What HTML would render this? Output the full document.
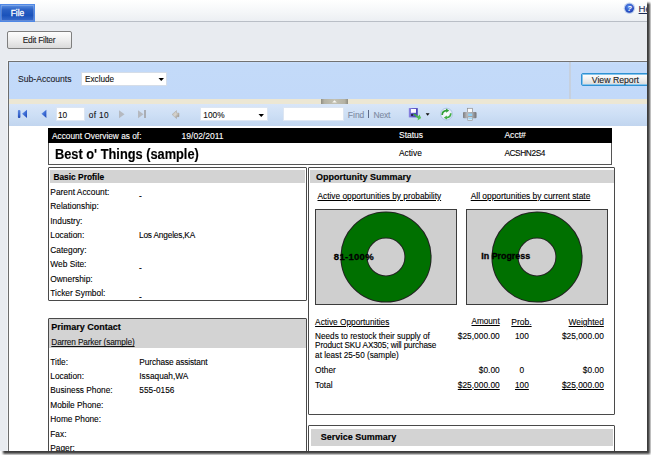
<!DOCTYPE html>
<html><head><meta charset="utf-8"><style>
html,body{margin:0;padding:0;width:651px;height:455px;overflow:hidden;background:#fff;}
body{position:relative;font-family:"Liberation Sans",sans-serif;}
.a{position:absolute;}
.t{position:absolute;white-space:nowrap;line-height:normal;-webkit-text-stroke:0.1px currentColor;}
</style></head><body>
<div class="a" style="left:3px;top:3px;width:647px;height:451px;background:#3c3c3c;filter:blur(0.95px)"></div>
<div class="a" style="left:0;top:0;width:647px;height:451px;overflow:hidden;background:#fff">
<div class="a" style="left:0px;top:0px;width:651px;height:21px;background:linear-gradient(#ffffff,#f4f6f8 60%,#eceff3)"></div>
<div class="a" style="left:0px;top:21px;width:651px;height:1px;background:#b9bec6"></div>
<div class="a" style="left:0px;top:22px;width:651px;height:433px;background:#e8ebf0"></div>
<div class="a" style="left:0px;top:4px;width:35px;height:18px;background:linear-gradient(#5a8fe2,#2a60c4 30%,#1a52bb 65%,#3a6ccc);border:1px solid #4f88e6;box-shadow:inset 0 0 0 1px rgba(255,255,255,0.22);box-sizing:border-box"></div>
<div class="t " style="left:10.8px;top:8.29px;font-size:8.3px;font-weight:normal;color:#fff;-webkit-text-stroke:0.3px #fff">File</div>
<svg class="a" style="left:622px;top:1px" width="15" height="15" viewBox="0 0 15 15"><defs><radialGradient id="hg" cx="0.45" cy="0.35" r="0.7"><stop offset="0" stop-color="#5d8ff0"/><stop offset="1" stop-color="#1537b0"/></radialGradient></defs><circle cx="7.4" cy="7.3" r="5.7" fill="#bccfee"/><circle cx="7.4" cy="7.3" r="4.5" fill="url(#hg)"/><text x="7.6" y="10.3" font-family="Liberation Sans" font-weight="bold" font-style="italic" font-size="7.5" fill="#fff" text-anchor="middle">?</text></svg>
<div class="t " style="left:638.6px;top:3.31px;font-size:9.6px;font-weight:normal;color:#1c2a55;text-decoration:underline">He</div>
<div class="a" style="left:7px;top:31px;width:65px;height:18px;background:linear-gradient(#fdfdfd,#eeeeee 50%,#dadada);border:1px solid #7f7f7f;border-radius:2px;box-sizing:border-box"></div>
<div class="t " style="left:22.7px;top:35.19px;font-size:8.3px;font-weight:normal;color:#1b1b1b;letter-spacing:-0.22px">Edit Filter</div>
<div class="a" style="left:8px;top:61px;width:640px;height:390px;background:#fff"></div>
<div class="a" style="left:7px;top:60px;width:1px;height:391px;background:#f1f3f6"></div>
<div class="a" style="left:7px;top:60px;width:641px;height:1px;background:#f1f3f6"></div>
<div class="a" style="left:9px;top:62px;width:638px;height:37px;background:linear-gradient(#c8defb,#c3daf9 3px,#c2d9f9)"></div>
<div class="a" style="left:8px;top:61px;width:640px;height:1px;background:#727272"></div>
<div class="a" style="left:8px;top:61px;width:1px;height:390px;background:#6c6c6c"></div>
<div class="a" style="left:569px;top:62px;width:2px;height:37px;background:#c6d0de"></div>
<div class="t " style="left:18px;top:74.22px;font-size:8.6px;font-weight:normal;color:#1d1d2b;">Sub-Accounts</div>
<div class="a" style="left:81px;top:71.5px;width:86px;height:14px;background:#fff;border:1px solid #d5dde8;box-sizing:border-box"></div>
<div class="t " style="left:85px;top:75.48px;font-size:8.2px;font-weight:normal;color:#111;">Exclude</div>
<svg class="a" style="left:158px;top:77px" width="7" height="5"><path d="M0.5 1 L6 1 L3.25 4 Z" fill="#000"/></svg>
<div class="a" style="left:581px;top:73px;width:70px;height:13px;background:linear-gradient(#ffffff,#f1f1f1 45%,#d9d9d9);border:1px solid #2f92d4;box-shadow:inset 0 0 0 1px #86c4ec;border-radius:2px;box-sizing:border-box"></div>
<div class="t " style="left:591.8px;top:75.13px;font-size:8.7px;font-weight:normal;color:#222;">View Report</div>
<div class="a" style="left:9px;top:99px;width:638px;height:5px;background:#ece7d4"></div>
<div class="a" style="left:321px;top:99px;width:27px;height:5px;background:linear-gradient(to right,#8f8d82,#b4b2a4 12%,#c2c0b2 50%,#b4b2a4 88%,#8f8d82)"></div>
<svg class="a" style="left:331px;top:99px" width="7" height="5"><path d="M1.2 3.4 L3.5 1.2 L5.8 3.4 Z" fill="#fafaf5"/></svg>
<div class="a" style="left:9px;top:104px;width:638px;height:21.6px;background:linear-gradient(#d9e6f8,#cddff5 50%,#c1d5ef)"></div>
<svg class="a" style="left:14px;top:106px" width="36" height="18" viewBox="0 0 36 18">
<defs><linearGradient id="bt" x1="0" y1="0" x2="1" y2="1"><stop offset="0" stop-color="#8fb2f0"/><stop offset="0.5" stop-color="#3f6fd6"/><stop offset="1" stop-color="#1b46b8"/></linearGradient>
<linearGradient id="bb" x1="0" y1="0" x2="0" y2="1"><stop offset="0" stop-color="#5f8be0"/><stop offset="0.6" stop-color="#3b68cf"/><stop offset="1" stop-color="#1d46b0"/></linearGradient></defs>
<rect x="3.9" y="3.9" width="2.5" height="8" rx="1" fill="url(#bb)"/>
<path d="M13 3.8 L13 11.9 L8 7.85 Z" fill="url(#bt)"/>
<path d="M32.4 3.8 L32.4 11.9 L27.4 7.85 Z" fill="url(#bt)"/>
</svg>
<div class="a" style="left:56px;top:107px;width:29px;height:14px;background:#fff;border:1px solid #dde6f2;box-sizing:border-box"></div>
<div class="t " style="left:57.9px;top:109.99px;font-size:8.3px;font-weight:normal;color:#111;">10</div>
<div class="t " style="left:88.7px;top:109.99px;font-size:8.3px;font-weight:normal;color:#111;letter-spacing:0.35px">of 10</div>
<svg class="a" style="left:118px;top:110px" width="8" height="9"><path d="M1 0.3 L1 8.3 L6.5 4.3 Z" fill="#b5b9c0"/></svg>
<svg class="a" style="left:137px;top:110px" width="8" height="9"><path d="M1 0.3 L1 8.3 L6.5 4.3 Z" fill="#b5b9c0"/></svg>
<div class="a" style="left:144.3px;top:110.4px;width:2px;height:7.8px;background:#a9adb4"></div>
<svg class="a" style="left:165px;top:106px" width="20" height="18" viewBox="0 0 20 18"><defs><linearGradient id="ba" x1="0" y1="0" x2="1" y2="1"><stop offset="0" stop-color="#b9b6b0"/><stop offset="0.5" stop-color="#d6d3cd"/><stop offset="1" stop-color="#7f7b75"/></linearGradient></defs><path d="M7.1 8.5 L11.5 4.6 L11.5 7.1 L14 7.1 L14 10.7 L11.5 10.7 L11.5 12.6 Z" fill="url(#ba)" stroke="#a9a59f" stroke-width="0.5"/></svg>
<div class="a" style="left:200px;top:107px;width:68px;height:14px;background:#fff;border:1px solid #dde6f2;box-sizing:border-box"></div>
<div class="t " style="left:203.3px;top:109.99px;font-size:8.3px;font-weight:normal;color:#111;">100%</div>
<svg class="a" style="left:258px;top:113px" width="7" height="5"><path d="M0.5 1 L6 1 L3.25 4 Z" fill="#000"/></svg>
<div class="a" style="left:283px;top:107px;width:61px;height:14px;background:#fff;border:1px solid #dde6f2;box-sizing:border-box"></div>
<div class="t " style="left:347.8px;top:109.81px;font-size:8.5px;font-weight:normal;color:#7d8aa3;">Find</div>
<div class="a" style="left:367.8px;top:110px;width:1.2px;height:8px;background:#5d6a88"></div>
<div class="t " style="left:373.6px;top:109.81px;font-size:8.5px;font-weight:normal;color:#7d8aa3;letter-spacing:-0.2px">Next</div>
<svg class="a" style="left:404px;top:104px" width="30" height="20" viewBox="0 0 30 20">
<defs><linearGradient id="fl" x1="0" x2="1"><stop offset="0" stop-color="#8e88e2"/><stop offset="0.4" stop-color="#5d55c9"/><stop offset="1" stop-color="#4a42b8"/></linearGradient>
<linearGradient id="ga" x1="0" y1="0" x2="1" y2="1"><stop offset="0" stop-color="#2f9a3a"/><stop offset="1" stop-color="#69cf6a"/></linearGradient></defs>
<rect x="4.8" y="4.1" width="9" height="9.3" fill="url(#fl)"/>
<rect x="6.9" y="5" width="5.1" height="3.8" fill="#fbfbff"/>
<rect x="7.2" y="10.2" width="1.6" height="1.6" fill="#111"/>
<path d="M9 10.3 L10.6 9.4 L14.2 12.2 L15.4 10.6 L17.2 14 L13.6 16.6 L14 14.6 Z" fill="url(#ga)"/>
<path d="M21.7 9.2 L25.6 9.2 L23.65 11.8 Z" fill="#111"/>
</svg>
<svg class="a" style="left:439px;top:107px" width="15" height="15" viewBox="0 0 15 15">
<defs><radialGradient id="rg"><stop offset="0" stop-color="#ffffff"/><stop offset="1" stop-color="#e2ebf7"/></radialGradient></defs>
<circle cx="7.5" cy="7.1" r="5.9" fill="url(#rg)" stroke="#a8c0e2" stroke-width="0.9"/>
<path d="M3.2 8 C3.2 5.5 5 3.8 7.5 3.6" stroke="#2f9e35" stroke-width="1.7" fill="none"/>
<path d="M7 1.6 L10.2 3.6 L7.2 5.8 Z" fill="#2f9e35"/>
<path d="M11.8 6.3 C11.8 8.8 10 10.5 7.5 10.7" stroke="#3fae45" stroke-width="1.7" fill="none"/>
<path d="M8 12.6 L4.8 10.7 L7.8 8.5 Z" fill="#3fae45"/>
</svg>
<svg class="a" style="left:462px;top:107px" width="15" height="15" viewBox="0 0 15 15">
<defs><linearGradient id="pg" x1="0" x2="1"><stop offset="0" stop-color="#7b7c80"/><stop offset="0.3" stop-color="#b9babd"/><stop offset="0.7" stop-color="#a6a7ab"/><stop offset="1" stop-color="#6f7074"/></linearGradient></defs>
<rect x="5.5" y="1.3" width="5" height="4.5" fill="#fafafa" stroke="#8c8c8c" stroke-width="0.7"/>
<rect x="1" y="5" width="13.5" height="6.2" rx="1" fill="url(#pg)"/>
<rect x="5.8" y="10" width="4.8" height="3.6" fill="#f4f8fc" stroke="#8c8c8c" stroke-width="0.6"/>
<rect x="6.2" y="6.6" width="4" height="2.4" fill="#8fd0f5"/>
<rect x="6.3" y="10.6" width="3.8" height="1.8" fill="#9fd6f5"/>
</svg>
<div class="a" style="left:47.5px;top:128px;width:564.5px;height:15px;background:#000"></div>
<div class="a" style="left:48px;top:143px;width:564px;height:22px;background:#fff;border:1px solid #555;border-top:none;box-sizing:border-box"></div>
<div class="t " style="left:52px;top:130.99px;font-size:8.3px;font-weight:normal;color:#fff;">Account Overview as of:</div>
<div class="t " style="left:181.6px;top:130.81px;font-size:8.5px;font-weight:normal;color:#fff;">19/02/2011</div>
<div class="t " style="left:399px;top:130.11px;font-size:8.5px;font-weight:normal;color:#fff;">Status</div>
<div class="t " style="left:504.4px;top:130.02px;font-size:8.6px;font-weight:normal;color:#fff;">Acct#</div>
<div class="t " style="left:55px;top:145.82px;font-size:13.9px;font-weight:bold;color:#000;-webkit-text-stroke:0.15px currentColor;transform:scaleX(0.921);transform-origin:0 0;-webkit-text-stroke:0.15px #000">Best o' Things (sample)</div>
<div class="t " style="left:399px;top:147.80px;font-size:8.4px;font-weight:normal;color:#000;">Active</div>
<div class="t " style="left:504.4px;top:147.89px;font-size:8.3px;font-weight:normal;color:#000;letter-spacing:-0.4px">ACSHN2S4</div>
<div class="a" style="left:48px;top:167px;width:259px;height:134px;border:1px solid #4a4a4a;box-sizing:border-box;background:#fff;border-radius:1px"></div>
<div class="a" style="left:50px;top:170px;width:255px;height:13px;background:#d3d3d3"></div>
<div class="t " style="left:53.4px;top:171.90px;font-size:8.4px;font-weight:bold;color:#000;-webkit-text-stroke:0.15px currentColor;">Basic Profile</div>
<div class="t " style="left:50.3px;top:186.90px;font-size:8.4px;font-weight:normal;color:#000;">Parent Account:</div>
<div class="t " style="left:139px;top:190.69px;font-size:8.3px;font-weight:normal;color:#000;">-</div>
<div class="t " style="left:50.3px;top:201.40px;font-size:8.4px;font-weight:normal;color:#000;">Relationship:</div>
<div class="t " style="left:50.3px;top:215.90px;font-size:8.4px;font-weight:normal;color:#000;">Industry:</div>
<div class="t " style="left:50.3px;top:230.40px;font-size:8.4px;font-weight:normal;color:#000;">Location:</div>
<div class="t " style="left:139px;top:230.49px;font-size:8.3px;font-weight:normal;color:#000;letter-spacing:-0.18px">Los Angeles,KA</div>
<div class="t " style="left:50.3px;top:244.90px;font-size:8.4px;font-weight:normal;color:#000;">Category:</div>
<div class="t " style="left:50.3px;top:259.40px;font-size:8.4px;font-weight:normal;color:#000;">Web Site:</div>
<div class="t " style="left:139px;top:263.19px;font-size:8.3px;font-weight:normal;color:#000;">-</div>
<div class="t " style="left:50.3px;top:273.90px;font-size:8.4px;font-weight:normal;color:#000;">Ownership:</div>
<div class="t " style="left:50.3px;top:288.40px;font-size:8.4px;font-weight:normal;color:#000;">Ticker Symbol:</div>
<div class="t " style="left:139px;top:292.19px;font-size:8.3px;font-weight:normal;color:#000;">-</div>
<div class="a" style="left:48px;top:318px;width:259px;height:140px;border:1px solid #4a4a4a;box-sizing:border-box;background:#fff;border-radius:1px"></div>
<div class="a" style="left:49px;top:319px;width:257px;height:29px;background:#d3d3d3"></div>
<div class="t " style="left:51.3px;top:322.36px;font-size:9.0px;font-weight:bold;color:#000;-webkit-text-stroke:0.15px currentColor;">Primary Contact</div>
<div class="t " style="left:51.3px;top:337.29px;font-size:8.3px;font-weight:normal;color:#111;text-decoration:underline;letter-spacing:-0.155px">Darren Parker (sample)</div>
<div class="t " style="left:50.3px;top:356.79px;font-size:8.3px;font-weight:normal;color:#000;">Title:</div>
<div class="t " style="left:139.3px;top:356.79px;font-size:8.3px;font-weight:normal;color:#000;letter-spacing:-0.11px">Purchase assistant</div>
<div class="t " style="left:50.3px;top:371.14px;font-size:8.3px;font-weight:normal;color:#000;">Location:</div>
<div class="t " style="left:139.3px;top:371.14px;font-size:8.3px;font-weight:normal;color:#000;">Issaquah,WA</div>
<div class="t " style="left:50.3px;top:385.49px;font-size:8.3px;font-weight:normal;color:#000;">Business Phone:</div>
<div class="t " style="left:139.3px;top:385.49px;font-size:8.3px;font-weight:normal;color:#000;">555-0156</div>
<div class="t " style="left:50.3px;top:399.84px;font-size:8.3px;font-weight:normal;color:#000;">Mobile Phone:</div>
<div class="t " style="left:50.3px;top:414.19px;font-size:8.3px;font-weight:normal;color:#000;">Home Phone:</div>
<div class="t " style="left:50.3px;top:428.54px;font-size:8.3px;font-weight:normal;color:#000;">Fax:</div>
<div class="t " style="left:50.3px;top:442.89px;font-size:8.3px;font-weight:normal;color:#000;">Pager:</div>
<div class="a" style="left:308px;top:167px;width:307px;height:248px;border:1px solid #4a4a4a;box-sizing:border-box;background:#fff;border-radius:1px"></div>
<div class="a" style="left:310px;top:170px;width:304px;height:13px;background:#d3d3d3"></div>
<div class="t " style="left:316px;top:171.55px;font-size:9.0px;font-weight:bold;color:#000;-webkit-text-stroke:0.15px currentColor;">Opportunity Summary</div>
<div class="t " style="left:317.5px;top:190.79px;font-size:8.3px;font-weight:normal;color:#000;text-decoration:underline">Active opportunities by probability</div>
<div class="t " style="left:470.7px;top:190.70px;font-size:8.4px;font-weight:normal;color:#000;text-decoration:underline">All opportunities by current state</div>
<div class="a" style="left:315px;top:209px;width:142px;height:96px;background:#cfcfcf;border:1px solid #3c3c3c;box-sizing:border-box"></div>
<svg class="a" style="left:339px;top:209.5px" width="94" height="94"><circle cx="47" cy="47" r="32" fill="none" stroke="#222" stroke-width="27.2"/><circle cx="47" cy="47" r="32" fill="none" stroke="#007000" stroke-width="25.2"/></svg>
<div class="t " style="left:333.8px;top:250.70px;font-size:9.5px;font-weight:bold;color:#000;-webkit-text-stroke:0.15px currentColor;-webkit-text-stroke:0.3px #000;letter-spacing:0.3px">81-100%</div>
<div class="a" style="left:466px;top:209px;width:142px;height:96px;background:#cfcfcf;border:1px solid #3c3c3c;box-sizing:border-box"></div>
<svg class="a" style="left:490.4px;top:209.5px" width="94" height="94"><circle cx="47" cy="47" r="32" fill="none" stroke="#222" stroke-width="27.2"/><circle cx="47" cy="47" r="32" fill="none" stroke="#007000" stroke-width="25.2"/></svg>
<div class="t " style="left:481.3px;top:251.25px;font-size:8.9px;font-weight:bold;color:#000;-webkit-text-stroke:0.15px currentColor;-webkit-text-stroke:0.3px #000;letter-spacing:0px">In Progress</div>
<div class="t " style="left:315.1px;top:317.19px;font-size:8.3px;font-weight:normal;color:#000;text-decoration:underline">Active Opportunities</div>
<div class="t" style="right:147.3px;top:317.28px;font-size:8.2px;font-weight:normal;color:#000;text-align:right;text-decoration:underline">Amount</div>
<div class="t " style="left:511.3px;top:317.01px;font-size:8.5px;font-weight:normal;color:#000;text-decoration:underline">Prob.</div>
<div class="t" style="right:43.200000000000045px;top:317.10px;font-size:8.4px;font-weight:normal;color:#000;text-align:right;text-decoration:underline">Weighted</div>
<div class="t " style="left:315.1px;top:331.58px;font-size:8.2px;font-weight:normal;color:#000;letter-spacing:0px">Needs to restock their supply of</div>
<div class="t " style="left:315.1px;top:341.38px;font-size:8.2px;font-weight:normal;color:#000;letter-spacing:-0.14px">Product SKU AX305; will purchase</div>
<div class="t " style="left:315.1px;top:351.18px;font-size:8.2px;font-weight:normal;color:#000;letter-spacing:0px">at least 25-50 (sample)</div>
<div class="t" style="right:147.3px;top:331.40px;font-size:8.4px;font-weight:normal;color:#000;text-align:right;">$25,000.00</div>
<div class="t" style="left:421.9px;width:200px;text-align:center;top:331.49px;font-size:8.3px;font-weight:normal;color:#000;">100</div>
<div class="t" style="right:43.200000000000045px;top:331.40px;font-size:8.4px;font-weight:normal;color:#000;text-align:right;">$25,000.00</div>
<div class="t " style="left:315.1px;top:365.19px;font-size:8.3px;font-weight:normal;color:#000;">Other</div>
<div class="t" style="right:147.3px;top:365.10px;font-size:8.4px;font-weight:normal;color:#000;text-align:right;">$0.00</div>
<div class="t" style="left:421.9px;width:200px;text-align:center;top:365.19px;font-size:8.3px;font-weight:normal;color:#000;">0</div>
<div class="t" style="right:43.200000000000045px;top:365.10px;font-size:8.4px;font-weight:normal;color:#000;text-align:right;">$0.00</div>
<div class="t " style="left:315.1px;top:379.59px;font-size:8.3px;font-weight:normal;color:#000;">Total</div>
<div class="t" style="right:147.3px;top:379.50px;font-size:8.4px;font-weight:normal;color:#000;text-align:right;text-decoration:underline">$25,000.00</div>
<div class="t" style="left:421.9px;width:200px;text-align:center;top:379.59px;font-size:8.3px;font-weight:normal;color:#000;"><u>100</u></div>
<div class="t" style="right:43.200000000000045px;top:379.50px;font-size:8.4px;font-weight:normal;color:#000;text-align:right;text-decoration:underline">$25,000.00</div>
<div class="a" style="left:308px;top:425px;width:307px;height:40px;border:1px solid #4a4a4a;box-sizing:border-box;background:#fff;border-radius:1px"></div>
<div class="a" style="left:311px;top:429px;width:302px;height:17px;background:#d3d3d3"></div>
<div class="t " style="left:320.8px;top:431.66px;font-size:9.0px;font-weight:bold;color:#000;-webkit-text-stroke:0.15px currentColor;">Service Summary</div>
</div>
</body></html>
